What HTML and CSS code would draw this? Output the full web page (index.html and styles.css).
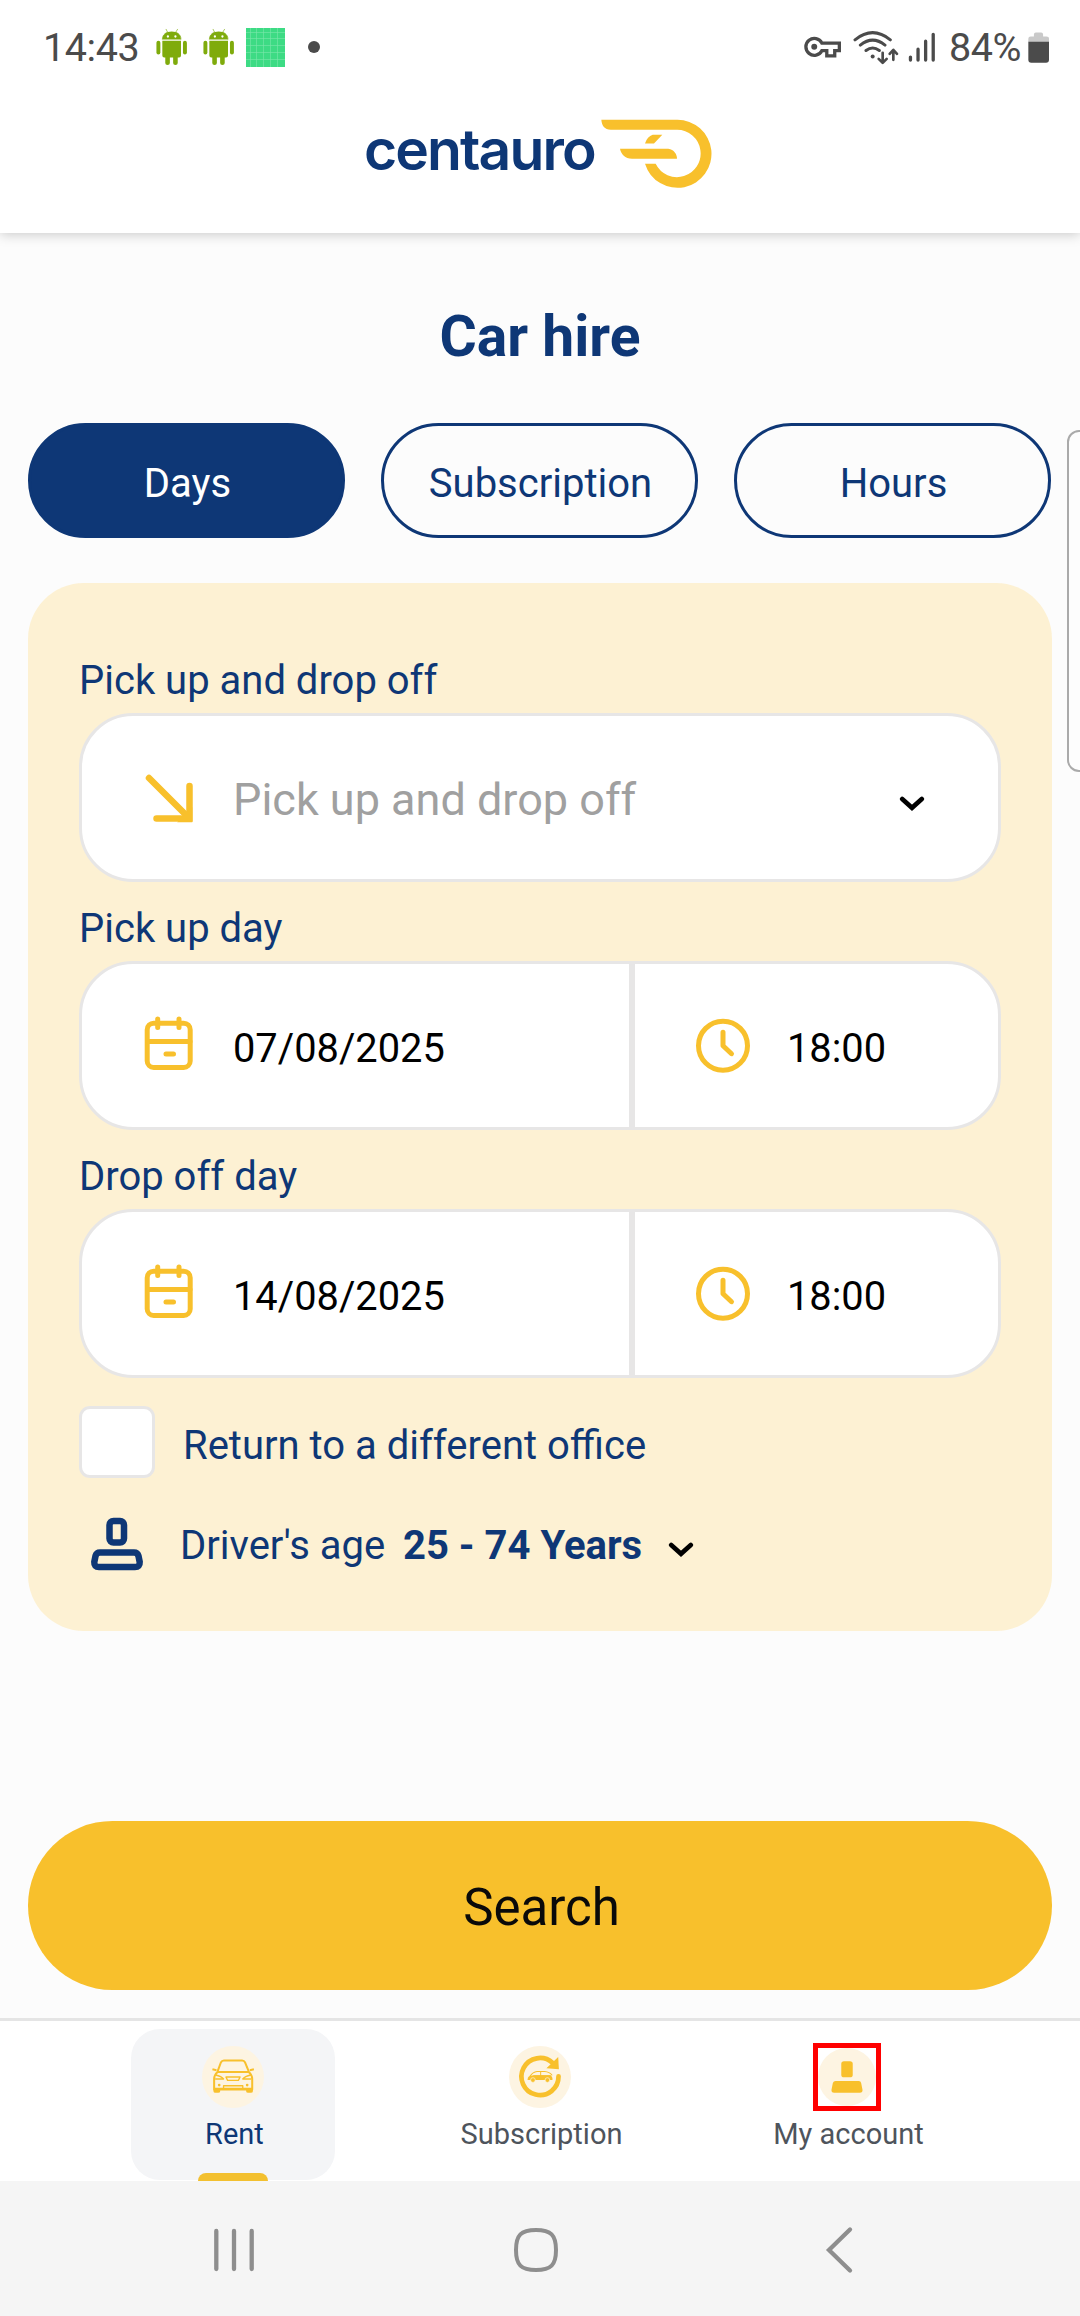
FILE: index.html
```html
<!DOCTYPE html>
<html lang="en">
<head>
<meta charset="utf-8">
<title>Centauro – Car hire</title>
<link rel="stylesheet" href="styles.css">
</head>
<body>
<div class="screen">
  <div class="status">
    <span class="status-text clock">14:43</span>
    <svg class="android" viewBox="464 84 100 116"><use href="#android"/></svg>
    <svg class="android" viewBox="464 84 100 116"><use href="#android"/></svg>
    <svg class="grid-icon" viewBox="0 0 39 39"><rect width="39" height="39" fill="#3ddb84"/><path d="M4.500 0V39M10.500 0V39M17.500 0V39M24.500 0V39M31.500 0V39M0 4.500H39M0 10.500H39M0 17.500H39M0 24.500H39M0 31.500H39" stroke="#7be8ab" stroke-width=".6"/></svg>
    <span class="dot"></span>
    <span class="spacer"></span>
    <svg class="key" viewBox="70 112 112 66" fill="none" stroke="#4b4b4b" stroke-width="10"><path d="M124 133A25.500 25.500 0 1 0 124 156H139V172H163V156H177V133Z"/><circle cx="101" cy="144.500" r="9" fill="#4b4b4b" stroke="none"/></svg>
    <svg class="wifi" viewBox="219 90 138 104" fill="none" stroke="#4b4b4b" stroke-width="9" stroke-linecap="round" stroke-linejoin="round"><path d="M225 119Q278 76 331 119M241 135Q278 105 315 135M258 151Q278 136 298 151"/><circle cx="278" cy="169" r="6" fill="#4b4b4b" stroke="none"/><path stroke-width="8" d="M308 158V187M296 176L308 188L320 176M340 179V151M329 161L340 149L351 161"/></svg>
    <svg class="signal" viewBox="383 96 84 94" stroke="#4b4b4b" stroke-width="10" stroke-linecap="round"><path d="M390 172V181M413 148V181M436 124V181M459 103V181"/></svg>
    <span class="status-text percent">84%</span>
    <svg class="battery" viewBox="743 94 64 93"><path d="M744 124V114Q744 107 751 107H761V101Q761 95 767 95H783Q789 95 789 101V107H799Q807 107 807 114V124Z" fill="#c9c9c9"/><path d="M744 123H807V178Q807 187 798 187H753Q744 187 744 178Z" fill="#4b4b4b"/></svg>
  </div>

  <header class="header">
    <span class="brand">centauro</span>
    <svg class="brand-mark" viewBox="750 55 336 212" fill="#f8c02c"><path d="M754 60H981A102 102 0 1 1 885 192H917A71 71 0 1 0 981 90H782C764 90 755 77 754 60Z"/><path d="M885 131Q892 110 908 105H937L912 131Z"/><path d="M810 147H955C972 149 981 164 981 177H846C825 177 813 163 810 147Z"/></svg>
  </header>

  <main class="main">
    <h1 class="title">Car hire</h1>
    <div class="modes">
      <button class="mode mode-active">Days</button>
      <button class="mode">Subscription</button>
      <button class="mode">Hours</button>
    </div>

    <section class="card">
      <div class="label">Pick up and drop off</div>
      <div class="field">
        <div class="cell">
          <svg class="icon" viewBox="0 0 60 60" fill="none" stroke="#f8c02c" stroke-width="6.500" stroke-linecap="round"><path d="M9 10L48 49"/><path d="M16.500 50.500H49.500V18"/><path d="M49 47V51H45Z" fill="#f8c02c" stroke-linecap="butt"/></svg>
          <span class="placeholder">Pick up and drop off</span>
          <svg class="chevron push" viewBox="0 0 26 17"><use href="#chevron"/></svg>
        </div>
      </div>

      <div class="label">Pick up day</div>
      <div class="field">
        <div class="cell cell-date">
          <svg class="icon" viewBox="0 0 60 60"><use href="#calendar"/></svg>
          <span class="value">07/08/2025</span>
        </div>
        <div class="cell cell-time">
          <svg class="icon" viewBox="0 0 60 60"><use href="#time"/></svg>
          <span class="value">18:00</span>
        </div>
      </div>

      <div class="label">Drop off day</div>
      <div class="field">
        <div class="cell cell-date">
          <svg class="icon" viewBox="0 0 60 60"><use href="#calendar"/></svg>
          <span class="value">14/08/2025</span>
        </div>
        <div class="cell cell-time">
          <svg class="icon" viewBox="0 0 60 60"><use href="#time"/></svg>
          <span class="value">18:00</span>
        </div>
      </div>

      <div class="option">
        <span class="checkbox"></span>
        <span class="option-text">Return to a different office</span>
      </div>

      <div class="driver">
        <svg class="driver-icon" viewBox="0 0 54 54" fill="none" stroke="#0e3776" stroke-width="6.500"><rect x="19.500" y="4" width="14.500" height="21.500" rx="4"/><path d="M10 35.500H44Q47.500 35.500 48.500 39L49.700 45Q50 50 45 50H9Q4 50 4.300 45L5.500 39Q6.500 35.500 10 35.500Z"/></svg>
        <span class="driver-label">Driver's age</span>
        <strong class="driver-value">25 - 74 Years</strong>
        <svg class="chevron" viewBox="0 0 26 17"><use href="#chevron"/></svg>
      </div>
    </section>

    <button class="search">Search</button>
  </main>

  <nav class="tabs">
    <div class="tab tab-active">
      <svg class="tab-icon" viewBox="307 110 184 184"><circle cx="399" cy="202" r="92" fill="#fdf4e2"/><g fill="none" stroke="#f8c02c" stroke-width="6" stroke-linejoin="round"><path d="M353 186L363 159Q366 153 372 153H426Q432 153 435 159L446 186"/><path d="M338 179L350 182M461 179L449 182"/><path d="M353 187H446Q456 196 456 208V239H343V208Q343 196 353 187Z"/><path stroke-width="4" d="M378 202H420L415 212H383ZM347 196Q365 200 371 208H346M452 196Q434 200 428 208H453M371 236V228H428V236M343 236H456"/></g><path d="M341 238H361V244Q361 249 355 249H347Q341 249 341 244ZM438 238H458V244Q458 249 452 249H444Q438 249 438 244Z" fill="#f8c02c"/><circle cx="358" cy="226" r="4" fill="#f8c02c"/><circle cx="441" cy="226" r="4" fill="#f8c02c"/></svg>
      <span class="tab-label">Rent</span>
      <span class="tab-marker"></span>
    </div>
    <div class="tab">
      <svg class="tab-icon" viewBox="1228 109 184 184"><circle cx="1320" cy="201" r="92" fill="#fdf4e2"/><path d="M1375 199A55 55 0 1 1 1357 159" fill="none" stroke="#f8c02c" stroke-width="14" stroke-linecap="round"/><path d="M1374 142L1376 178L1339 175Z" fill="#f8c02c"/><path d="M1290 199Q1299 186 1311 185H1334Q1348 186 1356 196" fill="none" stroke="#f8c02c" stroke-width="3"/><path d="M1322 186V197M1300 197H1352" stroke="#f8c02c" stroke-width="3"/><path d="M1284 203Q1288 196 1304 196H1350Q1358 199 1357 210H1283Z" fill="#f8c02c"/><circle cx="1299" cy="210" r="7" fill="#f8c02c" stroke="#fdf4e2" stroke-width="2"/><circle cx="1342" cy="210" r="7" fill="#f8c02c" stroke="#fdf4e2" stroke-width="2"/></svg>
      <span class="tab-label">Subscription</span>
    </div>
    <div class="tab">
      <span class="tab-highlight"></span>
      <svg class="tab-icon" viewBox="769 109 184 184"><circle cx="861" cy="201" r="86" fill="#fdf4e2"/><g fill="#f8c02c"><rect x="844" y="154" width="34" height="48" rx="8"/><path d="M827 213H896Q902 213 903 219L907 239Q908 248 899 248H823Q814 248 815 239L819 219Q821 213 827 213Z"/></g></svg>
      <span class="tab-label">My account</span>
    </div>
  </nav>

  <div class="system-nav">
    <svg class="sys-icon" viewBox="0 0 50 50" stroke="#8e8e8e" stroke-width="4.300" stroke-linecap="round"><path d="M7.300 6V44M25 6V44M42.700 6V44"/></svg>
    <svg class="sys-icon" viewBox="0 0 50 50" fill="none" stroke="#8e8e8e" stroke-width="4"><path d="M24 5C39 5 44 10 44 25S39 45 24 45S4 40 4 25S9 5 24 5Z"/></svg>
    <svg class="sys-icon" viewBox="0 0 50 50" fill="none" stroke="#8e8e8e" stroke-width="4.300" stroke-linecap="round"><path d="M35 4.500L14 25L35 45.500"/></svg>
  </div>

  <span class="edge-handle"></span>
</div>

<svg class="defs" width="0" height="0">
  <defs>
    <g id="android" fill="#7fab0c">
      <path d="M486 119Q486 103 502 97L497 87M543 119Q543 103 527 97L533 87" fill="none" stroke="#7fab0c" stroke-width="2"/>
      <path d="M486 119Q488 95 514.500 95T543 119Z"/>
      <path d="M486 123H543V168Q543 174 537 174H533V191Q533 197 526 197T519 191V174H509V191Q509 197 502 197T495 191V174H492Q486 174 486 168Z"/>
      <rect x="468" y="123" width="12" height="42" rx="6"/>
      <rect x="549" y="123" width="12" height="42" rx="6"/>
      <circle cx="503" cy="110" r="3.500" fill="#fff"/>
      <circle cx="526" cy="110" r="3.500" fill="#fff"/>
    </g>
    <g id="calendar" fill="none" stroke="#f8c02c" stroke-width="5" stroke-linecap="round">
      <rect x="7.200" y="7.200" width="43" height="44.300" rx="6.500"/>
      <path d="M8 25.500H50M17.700 3V11.500M39 3V11.500M26 38H33.500"/>
    </g>
    <g id="time" fill="none" stroke="#f8c02c" stroke-width="5" stroke-linecap="round" stroke-linejoin="round">
      <circle cx="30" cy="29.700" r="24.500"/>
      <path d="M30 16.200V29.700L38.500 37.700"/>
    </g>
    <path id="chevron" d="M3.200 4L13 12.800L22.800 4" fill="none" stroke="#000" stroke-width="4.600" stroke-linecap="round"/>
  </defs>
</svg>
</body>
</html>
```

FILE: styles.css
```css
* { box-sizing: border-box; }

body {
  margin: 0;
  background: #fcfcfc;
  font-family: Roboto, "Noto Sans", sans-serif;
  font-size: 40px;
  color: #0e3776;
}

button {
  margin: 0;
  padding: 0;
  border: 0;
  font: inherit;
  color: inherit;
}

svg { display: block; flex: none; }
.defs { position: absolute; }

.screen {
  position: relative;
  display: flex;
  flex-direction: column;
  width: 1080px;
  height: 2316px;
  overflow: hidden;
}

/* Status bar */
.status {
  position: relative;
  z-index: 1;
  display: flex;
  align-items: center;
  height: 94px;
  padding: 0 31px 0 43px;
  background: #fff;
  color: #4b4b4b;
}
.status-text { white-space: nowrap; }
.clock { width: 112px; font-size: 39.5px; letter-spacing: -0.4px; }
.android { width: 33px; height: 38px; margin-right: 14px; }
.grid-icon { width: 39px; height: 39px; margin-left: -3px; }
.dot { width: 12px; height: 12px; margin-left: 23px; border-radius: 50%; background: #4b4b4b; }
.spacer { flex: 1; }
.key { width: 37px; height: 22px; margin-right: 12px; }
.wifi { width: 46px; height: 35px; margin-right: 9px; }
.signal { width: 28px; height: 31px; margin-right: 13px; }
.percent { width: 79px; font-size: 39.5px; letter-spacing: -0.4px; }
.battery { width: 21px; height: 31px; }

/* Brand header */
.header {
  position: relative;
  display: flex;
  justify-content: center;
  align-items: flex-start;
  gap: 3px;
  height: 139px;
  padding: 24px 4px 0 0;
  background: #fff;
  box-shadow: 0 1px 12px rgba(0, 0, 0, 0.22);
}
.brand {
  width: 233px;
  padding-top: 2px;
  font: 600 57px/60px Inter, sans-serif;
  letter-spacing: -1.9px;
}
.brand-mark { width: 112px; height: 71px; }

.main { height: 1785px; padding: 71px 28px 0; }

.title {
  margin: 0 0 53px;
  font-size: 57px;
  line-height: 66px;
  font-weight: 700;
  text-align: center;
}

.modes { display: grid; grid-template-columns: repeat(3, 317px); justify-content: space-between; width: 1023px; margin-bottom: 45px; }
.mode {
  height: 115px;
  padding: 6px 0 0 2px;
  border: 3px solid #0e3776;
  border-radius: 58px;
  background: transparent;
}
.mode-active { background: #0e3776; color: #fff; }

/* Booking form */
.card {
  height: 1048px;
  margin-bottom: 190px;
  padding: 64px 51px 0;
  border-radius: 56px;
  background: #fdf1d3;
}
.label { height: 66px; line-height: 68px; }
.field { display: flex; height: 169px; margin-bottom: 13px; }
.cell {
  display: flex;
  align-items: center;
  flex: 1;
  padding: 0 73px 0 58px;
  border: 3px solid #e7e6e6;
  border-radius: 54px;
  background: #fff;
}
.cell-date { flex: 0 0 553px; border-radius: 54px 0 0 54px; }
.cell-time { border-radius: 0 54px 54px 0; }
.icon { width: 60px; height: 60px; margin-right: 33px; }
.cell-time .icon { margin-right: 34px; }
.placeholder { padding-top: 4px; font-size: 45px; color: #a0a0a0; }
.value { padding-top: 5px; font-size: 39.8px; color: #000; }
.chevron { width: 26px; height: 17px; }
.push { margin: 12px 0 0 auto; }

.option { display: flex; align-items: center; height: 72px; margin-top: 28px; }
.checkbox { width: 76px; height: 72px; border: 3px solid #e7e6e6; border-radius: 11px; background: #fff; }
.option-text { padding: 7px 0 0 28px; }

.driver { display: flex; align-items: center; height: 60px; margin-top: 36px; }
.driver-icon { width: 54px; height: 54px; margin: 0 36px 0 11px; }
.driver-label { width: 223px; padding-top: 2px; }
.driver-value { width: 265px; padding-top: 2px; font-weight: 700; }
.driver .chevron { margin-top: 10px; }

.search {
  display: block;
  width: 1024px;
  height: 169px;
  padding: 4px 0 0 3px;
  border-radius: 85px;
  background: #f8c02c;
  font-size: 51px;
  color: #0a0a0a;
}

/* Bottom tabs */
.tabs {
  display: flex;
  justify-content: center;
  gap: 103px;
  height: 163px;
  padding-top: 8px;
  border-top: 3px solid #e5e5e5;
  background: #fff;
}
.tab {
  position: relative;
  display: flex;
  flex-direction: column;
  align-items: center;
  gap: 9px;
  width: 204px;
  height: 151px;
  padding-top: 17px;
  border-radius: 29px;
  font-size: 29px;
  line-height: 34px;
  color: #4e545c;
}
.tab-active { background: #f4f5f7; color: #0e3776; }
.tab-icon { width: 62px; height: 62px; }
.tab-label { padding-left: 3px; }
.tab-marker {
  position: absolute;
  left: 67px;
  bottom: -1px;
  width: 70px;
  height: 8px;
  border-radius: 8px 8px 0 0;
  background: #f3c02f;
}
.tab-highlight {
  position: absolute;
  left: 68px;
  top: 14px;
  width: 68px;
  height: 68px;
  border: 5px solid #f00;
}

/* Android navigation */
.system-nav {
  display: flex;
  align-items: center;
  justify-content: space-between;
  height: 135px;
  padding: 2px 215px 0 209px;
  background: #f5f5f5;
}
.sys-icon { width: 50px; height: 50px; }

.edge-handle {
  position: absolute;
  left: 1067px;
  top: 430px;
  width: 30px;
  height: 342px;
  border: 2px solid #aaa;
  border-radius: 12px;
  background: #fdfdfd;
}
```
